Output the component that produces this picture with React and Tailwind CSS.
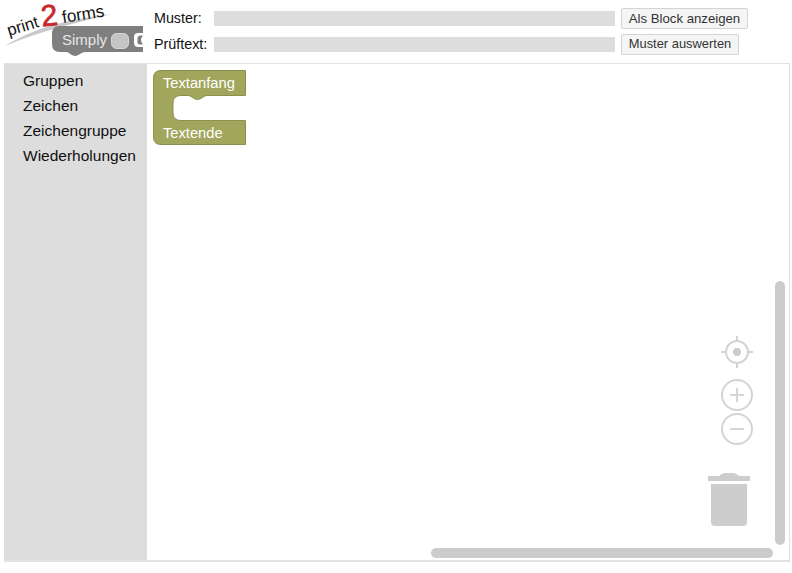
import React from "react";

function Logo() {
  return (
    <svg width="150" height="63" viewBox="0 0 150 63" className="block shrink-0">
      <path d="M5 46 C35 27 70 19 112 14 C75 23 40 31 5 46 Z" fill="#c9c9c9" />
      <text transform="translate(9 36) rotate(-17)" fontFamily="Liberation Sans, Arial, sans-serif" fontSize="16.5" fill="#111">print</text>
      <text transform="translate(42 26.5) rotate(-6)" fontFamily="Liberation Sans, Arial, sans-serif" fontSize="30" stroke="#c8282c" strokeWidth=".7" fill="#c8282c">2</text>
      <text transform="translate(63 23) rotate(-9)" fontFamily="Liberation Sans, Arial, sans-serif" fontSize="17" fill="#111">forms</text>
      <path d="M59 26 H143 V33 H138 Q134 33 134 37 V43 Q134 47 138 47 H143 V52 H86 Q82 52 80 54 Q77 56 75 56 Q72 56 69 53 Q68 52 66 52 H60 Q52 52 52 44 V34 Q52 26 59 26 Z" fill="#7f7f7f" />
      <path d="M143 35.5 H140 Q137.5 36 137.5 38 V42 Q137.5 44.5 140 44.5 H143 Q141 42 141 40 Q141 38 143 35.5 Z" fill="#7f7f7f" />
      <rect x="111.5" y="33.5" width="17" height="15" rx="5" fill="#c4c4c4" stroke="#d6d6d6" />
      <text x="62" y="45" fontFamily="Liberation Sans, Arial, sans-serif" fontSize="15" fill="#e6e6e6">Simply</text>
    </svg>
  );
}

function Block() {
  return (
    <svg width="94" height="76" viewBox="0 0 94 76" className="absolute left-[6px] top-[6px]">
      <path d="M8 .5 H92.5 V25.5 H54 Q52 25.5 50 27 Q47 29.5 44.5 29.5 Q42 29.5 39 27 Q37 25.5 35 25.5 H28 Q20 25.5 20 33 V43 Q20 50.5 28 50.5 H92.5 V74.5 H8 Q.5 74.5 .5 67 V8 Q.5 .5 8 .5 Z" fill="#a0a65c" stroke="#8b914d" strokeWidth="1" />
      <text x="10" y="18" fontFamily="Liberation Sans, Arial, sans-serif" fontSize="14.7" fill="#fff">Textanfang</text>
      <text x="10" y="68" fontFamily="Liberation Sans, Arial, sans-serif" fontSize="14.7" fill="#fff">Textende</text>
    </svg>
  );
}

function Controls() {
  const c = "#d4d4d4";
  return (
    <>
      <svg width="32" height="32" viewBox="0 0 32 32" className="absolute right-[36px] top-[272px]">
        <circle cx="16" cy="16" r="11" fill="none" stroke={c} strokeWidth="2" />
        <circle cx="16" cy="16" r="4" fill="#cccccc" />
        <path d="M16 0 V5 M16 27 V32 M0 16 H5 M27 16 H32" stroke={c} strokeWidth="2" />
      </svg>
      <svg width="32" height="32" viewBox="0 0 32 32" className="absolute right-[36px] top-[315px]">
        <circle cx="16" cy="16" r="15" fill="none" stroke={c} strokeWidth="2" />
        <path d="M16 9 V23 M9 16 H23" stroke={c} strokeWidth="2" />
      </svg>
      <svg width="32" height="32" viewBox="0 0 32 32" className="absolute right-[36px] top-[349px]">
        <circle cx="16" cy="16" r="15" fill="none" stroke={c} strokeWidth="2" />
        <path d="M9 16 H23" stroke={c} strokeWidth="2" />
      </svg>
      <svg width="42" height="55" viewBox="0 0 42 55" className="absolute right-[39px] top-[408px]">
        <path d="M0 9 H42 V4 H31 Q28 1 25 1 H17 Q14 1 11 4 H0 Z" fill="#cdcdcd" />
        <path d="M3 12 H39 V50 Q39 54 35 54 H7 Q3 54 3 50 Z" fill="#cdcdcd" />
      </svg>
    </>
  );
}

function Row({ label, button, buttonClass }) {
  return (
    <div className="flex items-center h-[21px]">
      <span className="w-[60px] text-[14.3px] text-[#111]">{label}</span>
      <div className="w-[401px] h-[15px] bg-[#dddddd]" />
      <button className={`ml-[6px] h-[21px] px-0 leading-none text-[#333] bg-[#f5f5f5] border border-[#d4d4d4] rounded-[2px] whitespace-nowrap ${buttonClass}`}>
        {button}
      </button>
    </div>
  );
}

export default function App() {
  return (
    <div className="w-[792px] h-[573px] bg-white overflow-hidden font-['Liberation_Sans',Arial,sans-serif]">
      <header className="flex h-[63px]">
        <Logo />
        <div className="ml-[4px] pt-[8px] flex flex-col gap-[5px]">
          <Row label="Muster:" button="Als Block anzeigen" buttonClass="w-[127px] text-[13.2px]" />
          <Row label="Prüftext:" button="Muster auswerten" buttonClass="w-[118px] text-[12.9px]" />
        </div>
      </header>
      <main className="ml-[4px] w-[786px] h-[499px] flex border-t border-r border-b-2 border-[#e2e2e2]">
        <aside className="w-[143px] bg-[#dddddd] pt-[4px] pl-[19px] text-[15.5px] leading-[25px] text-[#111]">
          <div>Gruppen</div>
          <div>Zeichen</div>
          <div>Zeichengruppe</div>
          <div>Wiederholungen</div>
        </aside>
        <section className="relative flex-1">
          <Block />
          <Controls />
          <div className="absolute right-[4px] top-[217px] w-[10px] h-[264px] rounded-full bg-[#cccccc]" />
          <div className="absolute left-[284px] bottom-[2px] w-[342px] h-[10px] rounded-full bg-[#cccccc]" />
        </section>
      </main>
    </div>
  );
}
